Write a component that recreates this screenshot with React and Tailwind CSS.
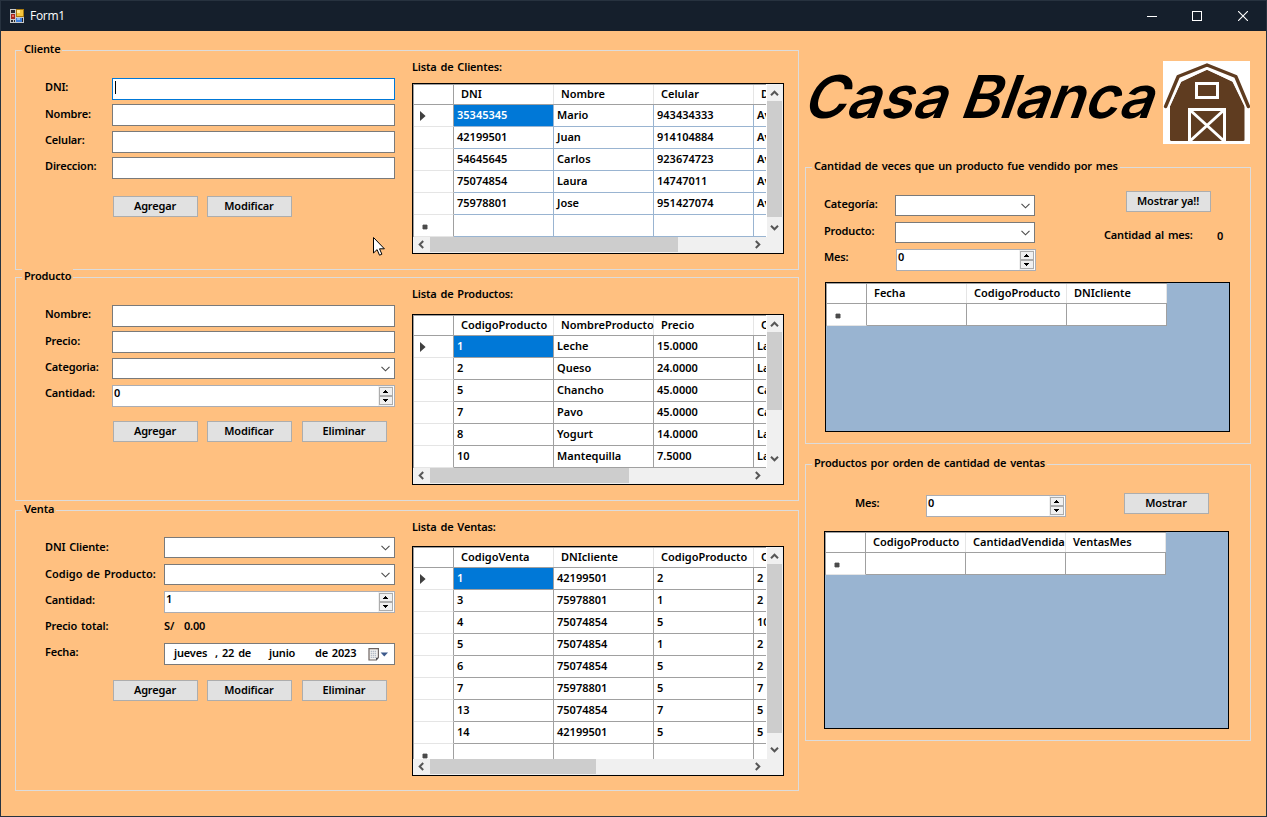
import React from "react";

/* ---------- form controls ---------- */

function Label({ className = "", children }) {
  return <span className={`block h-4 leading-4 whitespace-pre ${className}`}>{children}</span>;
}

function TextBox({ focused }) {
  return (
    <div
      className={`flex h-[22px] w-[283px] border bg-white pt-[2px] pl-[2px] ${
        focused ? "border-[#0078d7]" : "border-[#7a7a7a]"
      }`}
    >
      {focused && <span className="h-[13px] w-px bg-black" />}
    </div>
  );
}

function Combo({ className }) {
  return (
    <div className={`flex h-[21px] items-center justify-end border border-[#7a7a7a] bg-white pr-1 ${className}`}>
      <svg width="9" height="6" viewBox="0 0 9 6" fill="none" stroke="#4a4a4a" strokeWidth="1.1">
        <path d="M0.5 0.8 L4.5 4.8 L8.5 0.8" />
      </svg>
    </div>
  );
}

function SpinButton({ up }) {
  return (
    <div className="flex h-[9px] w-[14px] items-center justify-center border border-[#acacac] bg-[#f0f0f0]">
      <svg width="6" height="3" viewBox="0 0 6 3" fill="#000" shapeRendering="crispEdges">
        <path d={up ? "M2 0h1v1h1v1h1v1H0V2h1V1h1z" : "M0 0h5v1H4v1H3v1H2V2H1V1H0z"} />
      </svg>
    </div>
  );
}

function Spin({ value, className, pad = "pl-px" }) {
  return (
    <div className={`flex h-[22px] justify-between border border-[#abadb3] bg-white pr-px ${className}`}>
      <Label className={`${pad} -mt-px`}>{value}</Label>
      <div className="flex flex-col bg-[#f0f0f0] pt-px pl-px">
        <SpinButton up />
        <SpinButton />
      </div>
    </div>
  );
}

function Button({ className = "", children }) {
  return (
    <button
      type="button"
      className={`flex h-[21px] w-[85px] shrink-0 items-center justify-center border border-[#adadad] bg-[#e1e1e1] pr-px pb-px leading-4 ${className}`}
    >
      {children}
    </button>
  );
}

function Row({ label, labelWidth, className = "", labelClass = "mt-px", children }) {
  return (
    <div className={`flex items-start ${className}`}>
      <div className={`shrink-0 ${labelWidth}`}>
        <Label className={labelClass}>{label}</Label>
      </div>
      {children}
    </div>
  );
}

function Group({ title, className, children }) {
  return (
    <section className={`relative shrink-0 border border-[#dcdcdc] ${className}`}>
      <h2 className="absolute -top-[10px] left-[6px] h-4 bg-[#ffc080] px-[2px] leading-4 whitespace-pre">{title}</h2>
      {children}
    </section>
  );
}

/* ---------- data grid ---------- */

function Marker({ kind }) {
  if (kind === "current")
    return (
      <svg className="mt-px ml-[6px]" width="6" height="10" viewBox="0 0 6 10" fill="#404040">
        <path d="M0 0 L5.6 5 L0 10z" />
      </svg>
    );
  if (kind === "new")
    return (
      <svg className="mt-[2px] ml-2" width="6" height="6" viewBox="0 0 6 6">
        <rect x="1" y="1" width="4" height="4" fill="#404040" />
        <rect x="0" y="1" width="6" height="4" fill="#505050" opacity="0.5" />
        <rect x="1" y="0" width="4" height="6" fill="#505050" opacity="0.4" />
      </svg>
    );
  return null;
}

function GridTable({ columns, rows, line }) {
  return (
    <div className="flex shrink-0 flex-col border-t border-l border-[#a0a0a0] tracking-normal">
      <div className="flex h-5 shrink-0 bg-white">
        <div className="w-10 shrink-0 border-r border-b border-[#a0a0a0]" />
        {columns.map((c, i) => (
          <div key={i} className="flex w-[100px] shrink-0 flex-col border-b border-[#a0a0a0]">
            <div className="flex flex-1 items-start border-r border-[#e5e5e5] pt-px pl-[7px]">
              <Label>{c}</Label>
            </div>
          </div>
        ))}
      </div>
      {rows.map((r, i) => (
        <div key={i} className="flex h-[22px] shrink-0 bg-white">
          <div className="flex w-10 shrink-0 items-center border-r border-b border-r-[#a0a0a0] border-b-[#e5e5e5]">
            <Marker kind={r === null ? "new" : i === 0 ? "current" : ""} />
          </div>
          {columns.map((c, j) => (
            <div
              key={j}
              className={`flex w-[100px] shrink-0 items-start border-r border-b pt-[2px] pl-[3px] ${line} ${
                r && i === 0 && j === 0 ? "bg-[#0078d7] text-white" : ""
              }`}
            >
              <Label>{r ? r[j] : ""}</Label>
            </div>
          ))}
        </div>
      ))}
    </div>
  );
}

const ARROWS = {
  up: "M1 6.2 L4.5 2.7 L8 6.2",
  down: "M1 2.8 L4.5 6.3 L8 2.8",
  left: "M6.2 1 L2.7 4.5 L6.2 8",
  right: "M2.8 1 L6.3 4.5 L2.8 8",
};

function Arrow({ dir, className }) {
  return (
    <svg className={`shrink-0 ${className}`} width="9" height="9" viewBox="0 0 9 9" fill="none" stroke="#555" strokeWidth="2">
      <path d={ARROWS[dir]} />
    </svg>
  );
}

function ScrollGrid({ className, thumbV, thumbH, ...table }) {
  return (
    <div className={`flex w-[372px] flex-col border border-black bg-[#f0f0f0] ${className}`}>
      <div className="flex min-h-0 flex-1">
        <div className="w-[353px] shrink-0 overflow-hidden bg-white">
          <GridTable {...table} />
        </div>
        <div className="w-px shrink-0 bg-white" />
        <div className="flex w-4 shrink-0 flex-col">
          <Arrow dir="up" className="mt-[5px] mb-[3px] ml-[3px]" />
          <div className={`w-[15px] shrink-0 bg-[#cdcdcd] ${thumbV}`} />
          <div className="flex-1" />
          <Arrow dir="down" className="mb-[5px] ml-[3px]" />
        </div>
      </div>
      <div className="flex h-4 shrink-0 items-start">
        <Arrow dir="left" className="mt-[3px] mr-[4px] ml-[4px]" />
        <div className={`h-[15px] shrink-0 bg-[#cdcdcd] ${thumbH}`} />
        <div className="flex-1" />
        <Arrow dir="right" className="mt-[3px] mr-[21px]" />
      </div>
    </div>
  );
}

function EmptyGrid({ className, columns }) {
  return (
    <div className={`flex w-[405px] items-start border border-black bg-[#99b4d1] ${className}`}>
      <GridTable columns={columns} rows={[null]} line="border-[#a0a0a0]" />
    </div>
  );
}

/* ---------- pictures ---------- */

function AppIcon() {
  return (
    <svg width="14" height="14" viewBox="0 0 14 14" shapeRendering="crispEdges">
      <rect width="14" height="14" fill="#c9c9c9" />
      <rect x="1" y="1" width="4" height="3" fill="#23272e" />
      <rect x="1" y="5" width="4" height="5" fill="#a3261e" />
      <rect x="2" y="6" width="2" height="2" fill="#e8695c" />
      <rect x="6" y="0" width="8" height="8" fill="#a87a10" />
      <rect x="7" y="1" width="6" height="6" fill="#f6c63c" />
      <rect x="7" y="1" width="3" height="3" fill="#fde995" />
      <rect x="6" y="9" width="6" height="4" fill="#3f7fdb" />
      <rect x="7" y="9" width="3" height="2" fill="#8db8f2" />
      <rect x="1" y="11" width="2" height="2" fill="#23272e" />
      <rect x="4" y="11" width="1" height="2" fill="#23272e" />
      <rect x="12" y="9" width="1" height="4" fill="#23272e" />
    </svg>
  );
}

function Barn() {
  return (
    <svg width="87" height="83" viewBox="0 0 87 83" className="block bg-white">
      <path d="M7 45 L18 21 L44 8.5 L70 21 L81.5 45 V79 Q81.5 80 80 80 H8.5 Q7 80 7 78.5z" fill="#5f3c20" />
      <path d="M4.6 46.5 L17 19 L44 7 L70.5 19 L84 46.5" fill="none" stroke="#fff" strokeWidth="3.4" />
      <path
        d="M2.6 45.5 L15.2 15.5 L44 4 L72.8 15.5 L85.4 45.5"
        fill="none"
        stroke="#5f3c20"
        strokeWidth="3.4"
        strokeLinecap="round"
        strokeLinejoin="round"
      />
      <rect x="33.5" y="22.5" width="21" height="14" fill="none" stroke="#fff" strokeWidth="3" />
      <path d="M26.5 80 V48.5 H61.5 V80 M27 49 L61 80 M61 49 L27 80" fill="none" stroke="#fff" strokeWidth="3" />
    </svg>
  );
}

function CalendarIcon() {
  return (
    <svg width="21" height="13" viewBox="0 0 21 13" className="ml-px">
      <path d="M1 0.7 H10.4 V9.4 L8.4 12 H1z" fill="#f4f2f0" stroke="#6e6462" strokeWidth="1.2" />
      <g fill="#b4bac6">
        {[3, 5, 7].map((x) => [3, 5, 7, 9].map((y) => <rect key={`${x}-${y}`} x={x - 0.3} y={y - 0.3} width="1.4" height="1.3" />))}
      </g>
      <path d="M8 12.2 L8 9.8 L10.8 9.8z" fill="#4b4b52" />
      <path d="M12.6 4.4 H20 L16.3 8.4z" fill="#3d5a8c" />
    </svg>
  );
}

function Pointer() {
  return (
    <svg className="absolute top-[235px] left-[371px]" width="14" height="21" viewBox="0 0 14 21">
      <path
        d="M1.5 1.5 V17 L5.1 13.6 L7.5 19.2 L9.9 18.2 L7.5 12.8 H12.4z"
        fill="#fff"
        stroke="#000"
        strokeWidth="1"
      />
    </svg>
  );
}

/* ---------- data ---------- */

const CLIENTES = [
  ["35345345", "Mario", "943434333", "Av"],
  ["42199501", "Juan", "914104884", "Av"],
  ["54645645", "Carlos", "923674723", "Av"],
  ["75074854", "Laura", "14747011", "Av"],
  ["75978801", "Jose", "951427074", "Av"],
  null,
];

const PRODUCTOS = [
  ["1", "Leche", "15.0000", "La"],
  ["2", "Queso", "24.0000", "La"],
  ["5", "Chancho", "45.0000", "Ca"],
  ["7", "Pavo", "45.0000", "Ca"],
  ["8", "Yogurt", "14.0000", "La"],
  ["10", "Mantequilla", "7.5000", "La"],
];

const VENTAS = [
  ["1", "42199501", "2", "2"],
  ["3", "75978801", "1", "2"],
  ["4", "75074854", "5", "10"],
  ["5", "75074854", "1", "2"],
  ["6", "75074854", "5", "2"],
  ["7", "75978801", "5", "7"],
  ["13", "75074854", "7", "5"],
  ["14", "42199501", "5", "5"],
  null,
];

/* ---------- window ---------- */

function TitleBar() {
  return (
    <header className="flex h-[30px] shrink-0 items-center bg-[#151f2c] text-white">
      <div className="ml-[9px]">
        <AppIcon />
      </div>
      <span className="ml-[6px] font-['Open_Sans',sans-serif] text-[12px] leading-4 font-normal tracking-[-0.3px]">Form1</span>
      <div className="flex-1" />
      <div className="flex items-center">
        <svg width="10" height="10" viewBox="0 0 10 10" className="mr-[35px]">
          <path d="M0 5.5 H10" stroke="#fff" />
        </svg>
        <svg width="10" height="10" viewBox="0 0 10 10" className="mr-[36px]">
          <rect x="0.5" y="0.5" width="9" height="9" fill="none" stroke="#fff" />
        </svg>
        <svg width="10" height="10" viewBox="0 0 10 10" className="mr-[18px]">
          <path d="M0 0 L10 10 M10 0 L0 10" stroke="#fff" strokeWidth="1.1" />
        </svg>
      </div>
    </header>
  );
}

function ClienteGroup() {
  return (
    <Group title="Cliente" className="flex h-[220px]">
      <div className="flex w-[396px] flex-col pt-[27px] pl-[29px]">
        <Row label="DNI:" labelWidth="w-[67px]"><TextBox focused /></Row>
        <Row label="Nombre:" labelWidth="w-[67px]" className="mt-1" labelClass="mt-[2px]"><TextBox /></Row>
        <Row label="Celular:" labelWidth="w-[67px]" className="mt-[5px]"><TextBox /></Row>
        <Row label="Direccion:" labelWidth="w-[67px]" className="mt-1"><TextBox /></Row>
        <div className="mt-[17px] ml-[68px] flex gap-[9px]">
          <Button>Agregar</Button>
          <Button>Modificar</Button>
        </div>
      </div>
      <div className="flex flex-col pt-2">
        <Label>Lista de Clientes:</Label>
        <ScrollGrid
          className="mt-2 h-[171px]"
          thumbV="h-[116px]"
          thumbH="w-[248px]"
          columns={["DNI", "Nombre", "Celular", "D"]}
          rows={CLIENTES}
          line="border-[#99b4d1]"
        />
      </div>
    </Group>
  );
}

function ProductoGroup() {
  return (
    <Group title="Producto" className="mt-[7px] flex h-[224px]">
      <div className="flex w-[396px] flex-col pt-[27px] pl-[29px]">
        <Row label="Nombre:" labelWidth="w-[67px]"><TextBox /></Row>
        <Row label="Precio:" labelWidth="w-[67px]" className="mt-1" labelClass="mt-[2px]"><TextBox /></Row>
        <Row label="Categoria:" labelWidth="w-[67px]" className="mt-[5px]"><Combo className="w-[283px]" /></Row>
        <Row label="Cantidad:" labelWidth="w-[67px]" className="mt-[6px]" labelClass="mt-0"><Spin value="0" className="w-[283px]" /></Row>
        <div className="mt-[14px] ml-[68px] flex gap-[9px]">
          <Button>Agregar</Button>
          <Button>Modificar</Button>
          <Button className="ml-px">Eliminar</Button>
        </div>
      </div>
      <div className="flex flex-col pt-2">
        <Label>Lista de Productos:</Label>
        <ScrollGrid
          className="mt-3 h-[171px]"
          thumbV="h-[78px]"
          thumbH="w-[199px]"
          columns={["CodigoProducto", "NombreProducto", "Precio", "C"]}
          rows={PRODUCTOS}
          line="border-[#a0a0a0]"
        />
      </div>
    </Group>
  );
}

function VentaGroup() {
  return (
    <Group title="Venta" className="mt-[9px] flex h-[281px]">
      <div className="flex w-[396px] flex-col pt-[26px] pl-[29px]">
        <Row label="DNI Cliente:" labelWidth="w-[119px]" labelClass="mt-[2px]"><Combo className="w-[231px]" /></Row>
        <Row label="Codigo de Producto:" labelWidth="w-[119px]" className="mt-[6px]" labelClass="mt-[2px] tracking-normal"><Combo className="w-[231px]" /></Row>
        <Row label="Cantidad:" labelWidth="w-[119px]" className="mt-[6px]"><Spin value="1" pad="pl-px" className="w-[231px]" /></Row>
        <Row label="Precio total:" labelWidth="w-[119px]" className="mt-[5px]" labelClass="mt-0">
          <Label className="w-5">S/</Label>
          <Label>0.00</Label>
        </Row>
        <Row label="Fecha:" labelWidth="w-[119px]" className="mt-[9px]">
          <div className="flex h-[22px] w-[231px] items-start border border-[#7a7a7a] bg-white pt-px pl-[9px]">
            <Label className="w-[41px]">jueves</Label>
            <Label className="w-[7px]">,</Label>
            <Label className="w-[47px]">22 de</Label>
            <Label className="w-[46px]">junio</Label>
            <Label className="w-[52px]">de 2023</Label>
            <div className="pt-[3px]">
              <CalendarIcon />
            </div>
          </div>
        </Row>
        <div className="mt-[15px] ml-[68px] flex gap-[9px]">
          <Button>Agregar</Button>
          <Button>Modificar</Button>
          <Button className="ml-px">Eliminar</Button>
        </div>
      </div>
      <div className="flex flex-col pt-2">
        <Label>Lista de Ventas:</Label>
        <ScrollGrid
          className="mt-[11px] h-[230px]"
          thumbV="h-[169px]"
          thumbH="w-[166px]"
          columns={["CodigoVenta", "DNIcliente", "CodigoProducto", "C"]}
          rows={VENTAS}
          line="border-[#a0a0a0]"
        />
      </div>
    </Group>
  );
}

function MonthlyGroup() {
  return (
    <Group title="Cantidad de veces que un producto fue vendido por mes" className="flex h-[277px] flex-col">
      <div className="flex h-[114px] shrink-0">
        <div className="flex w-[298px] flex-col pt-[27px] pl-[18px]">
          <Row label="Categoría:" labelWidth="w-[71px]"><Combo className="w-[140px]" /></Row>
          <Row label="Producto:" labelWidth="w-[71px]" className="mt-[6px]"><Combo className="w-[140px]" /></Row>
          <Row label="Mes:" labelWidth="w-[72px]" className="mt-[6px]" labelClass="mt-0"><Spin value="0" className="w-[140px]" /></Row>
        </div>
        <div className="flex flex-col pt-[23px]">
          <Button className="ml-[22px]">Mostrar ya!!</Button>
          <div className="mt-[15px] flex">
            <Label className="w-[113px]">Cantidad al mes:</Label>
            <Label className="mt-px">0</Label>
          </div>
        </div>
      </div>
      <EmptyGrid className="ml-[19px] h-[150px]" columns={["Fecha", "CodigoProducto", "DNIcliente"]} />
    </Group>
  );
}

function RankingGroup() {
  return (
    <Group title="Productos por orden de cantidad de ventas" className="mt-5 flex h-[277px] flex-col">
      <div className="flex h-[66px] shrink-0 items-start pt-[28px] pl-[49px]">
        <Label className="mt-[2px] w-[71px]">Mes:</Label>
        <Spin value="0" className="mt-[2px] w-[140px]" />
        <Button className="ml-[58px]">Mostrar</Button>
      </div>
      <EmptyGrid className="ml-[18px] h-[198px]" columns={["CodigoProducto", "CantidadVendida", "VentasMes"]} />
    </Group>
  );
}

export default function App() {
  return (
    <div className="relative flex h-[817px] w-[1267px] flex-col overflow-hidden border border-[#27323f] bg-[#ffc080] font-['Noto_Sans',sans-serif] text-[11px] font-semibold tracking-[-0.17px] text-black [word-spacing:1.2px]">
      <TitleBar />
      <main className="flex min-h-0 flex-1">
        <div className="ml-[14px] flex w-[784px] shrink-0 flex-col pt-[19px]">
          <ClienteGroup />
          <ProductoGroup />
          <VentaGroup />
        </div>
        <div className="ml-[6px] flex w-[446px] shrink-0 flex-col">
          <div className="flex h-[136px] shrink-0">
            <div className="w-[358px] shrink-0 pt-[31px]">
              <h1 className="-ml-1 origin-[0_56px] -skew-x-[20deg] font-['Inter',sans-serif] text-[59px] leading-[70px] font-[560] tracking-[-0.2px] whitespace-pre [word-spacing:0px]">
                Casa Blanca
              </h1>
            </div>
            <div className="pt-[30px]">
              <Barn />
            </div>
          </div>
          <MonthlyGroup />
          <RankingGroup />
        </div>
      </main>
      <Pointer />
    </div>
  );
}
